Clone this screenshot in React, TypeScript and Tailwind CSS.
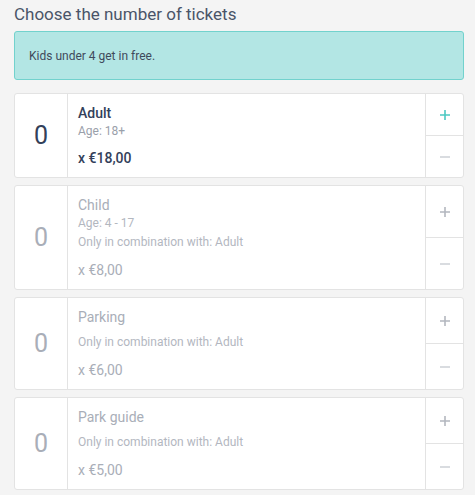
type Ticket = {
  name: string;
  age?: string;
  combo?: string;
  price: string;
  enabled: boolean;
};

const tickets: Ticket[] = [
  { name: 'Adult', age: 'Age: 18+', price: 'x €18,00', enabled: true },
  { name: 'Child', age: 'Age: 4 - 17', combo: 'Only in combination with: Adult', price: 'x €8,00', enabled: false },
  { name: 'Parking', combo: 'Only in combination with: Adult', price: 'x €6,00', enabled: false },
  { name: 'Park guide', combo: 'Only in combination with: Adult', price: 'x €5,00', enabled: false },
];

function PlusIcon({ className }: { className: string }) {
  return (
    <svg width="12" height="12" viewBox="0 0 12 12" className={className}>
      <path d="M6 1v10M1 6h10" stroke="currentColor" strokeWidth="1.6" />
    </svg>
  );
}

function MinusIcon() {
  return (
    <svg width="12" height="12" viewBox="0 0 12 12" className="text-[#cdd0d6]">
      <path d="M1 6h10" stroke="currentColor" strokeWidth="1.5" />
    </svg>
  );
}

function TicketRow({ t }: { t: Ticket }) {
  const on = t.enabled;
  return (
    <div className="flex bg-white border border-[#e3e3e3] rounded-[3px]">
      <div
        className={`w-[53px] shrink-0 flex items-center justify-center border-r border-[#e3e3e3] text-[25px] ${
          on ? 'text-[#33405a]' : 'text-[#a9aeb8]'
        }`}
      >
        0
      </div>
      <div className="flex-1 pl-[10px] pt-[10px] pb-[10px]">
        <div className={`text-[14px] leading-[18px] ${on ? 'font-medium text-[#33405a]' : 'text-[#a9aeb8]'}`}>
          {t.name}
        </div>
        {t.age && (
          <div className={`mt-px text-[12px] leading-[16px] ${on ? 'text-[#9aa0aa]' : 'text-[#b3b7bf]'}`}>{t.age}</div>
        )}
        {t.combo && (
          <div className={`${t.age ? 'mt-[3px]' : 'mt-[8px]'} text-[12px] leading-[16px] text-[#b3b7bf]`}>{t.combo}</div>
        )}
        <div
          className={`${t.combo ? 'mt-[11px]' : 'mt-[10px]'} text-[14px] leading-[18px] ${
            on ? 'font-medium text-[#33405a]' : 'text-[#a9aeb8]'
          }`}
        >
          {t.price}
        </div>
      </div>
      <div className="w-[38px] shrink-0 flex flex-col border-l border-[#e3e3e3]">
        <button className="flex-1 flex items-center justify-center border-b border-[#e3e3e3]">
          <PlusIcon className={on ? 'text-[#4cc9c2]' : 'text-[#b3b7bf]'} />
        </button>
        <button className="flex-1 flex items-center justify-center">
          <MinusIcon />
        </button>
      </div>
    </div>
  );
}

export default function App() {
  return (
    <div className="min-h-[495px] bg-[#f4f4f4] pl-[14px] pr-[11px] pb-[8px] pt-[3px] font-['Roboto',sans-serif]">
      <h2 className="text-[17px] leading-[22px] text-[#4a5468]">Choose the number of tickets</h2>
      <div className="mt-[6px] h-[49px] flex items-center px-[14px] bg-[#b3e6e4] border border-[#72d2cd] rounded-[3px] text-[12px] text-[#3f4a5c]">
        Kids under 4 get in free.
      </div>
      <div className="mt-[13px] flex flex-col gap-[7px]">
        {tickets.map((t) => (
          <TicketRow key={t.name} t={t} />
        ))}
      </div>
    </div>
  );
}
